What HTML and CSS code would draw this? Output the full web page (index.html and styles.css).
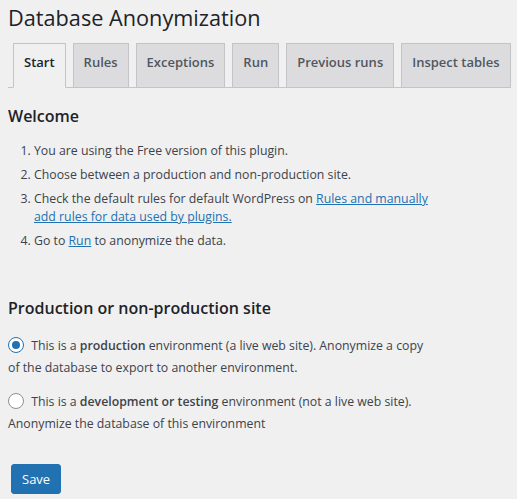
FILE: index.html
```html
<!DOCTYPE html>
<html>
<head>
<meta charset="utf-8">
<link rel="stylesheet" href="styles.css">
</head>
<body>
<div class="wrap">
  <h1 class="title">Database Anonymization</h1>
  <nav class="tabs">
    <a class="tab active">Start</a>
    <a class="tab">Rules</a>
    <a class="tab">Exceptions</a>
    <a class="tab">Run</a>
    <a class="tab">Previous runs</a>
    <a class="tab">Inspect tables</a>
  </nav>
  <section class="content">
    <h2 class="heading">Welcome</h2>
    <ol class="steps">
      <li>You are using the Free version of this plugin.</li>
      <li>Choose between a production and non-production site.</li>
      <li>Check the default rules for default WordPress on <a class="link">Rules and manually add rules for data used by plugins.</a></li>
      <li>Go to <a class="link">Run</a> to anonymize the data.</li>
    </ol>
    <h2 class="heading heading-2">Production or non-production site</h2>
    <div class="option">
      <label><span class="radio checked"></span> This is a <b>production</b> environment (a live web site). Anonymize a copy of the database to export to another environment.</label>
    </div>
    <div class="option">
      <label><span class="radio"></span> This is a <b>development or testing</b> environment (not a live web site). Anonymize the database of this environment</label>
    </div>
    <button class="btn">Save</button>
  </section>
</div>
</body>
</html>
```
FILE: styles.css
```css
html, body { margin: 0; padding: 0; background: #f0f0f1; }
body {
  font-family: "Open Sans", "Noto Sans", sans-serif;
  font-size: 12.3px;
  color: #3c434a;
}
.wrap { padding: 0 8px; }
.title {
  margin: 0;
  padding-top: 3px;
  font-size: 21.7px;
  font-weight: 400;
  line-height: 30px;
  color: #1d2327;
}
.tabs {
  display: flex;
  gap: 7px;
  margin-top: 10px;
  padding-left: 5px;
  border-bottom: 1px solid #c3c4c7;
  height: 44px;
  align-items: flex-end;
}
.tab {
  display: block;
  box-sizing: border-box;
  height: 45px;
  margin-bottom: -1px;
  padding: 6px 10px 12px;
  font-size: 13px;
  font-weight: 600;
  line-height: 25px;
  white-space: nowrap;
  color: #50575e;
  background: #dcdcde;
  border: 1px solid #c3c4c7;
}
.tab.active {
  background: #f0f0f1;
  color: #1d2327;
  border-bottom-color: #f0f0f1;
}
.content { max-width: 425px; }
.heading {
  margin: 17px 0 0;
  font-size: 16px;
  font-weight: 600;
  line-height: 22px;
  color: #1d2327;
}
.heading-2 { margin-top: 47px; }
.steps {
  margin: 15px 0 0;
  padding-left: 26px;
  line-height: 18px;
}
.steps li { margin-bottom: 6px; }
.link { color: #2271b1; text-decoration: underline; }
.option { margin-top: 16px; line-height: 22px; }
.option + .option { margin-top: 12px; }
.option b { font-weight: 600; }
.radio {
  display: inline-block;
  box-sizing: border-box;
  width: 16px;
  height: 16px;
  border: 1px solid #8c8f94;
  border-radius: 50%;
  background: #fff;
  vertical-align: -3px;
  margin-right: 4px;
  position: relative;
}
.radio.checked { border-color: #2271b1; }
.radio.checked::after {
  content: "";
  position: absolute;
  left: 3px; top: 3px;
  width: 8px; height: 8px;
  border-radius: 50%;
  background: #2271b1;
}
.btn {
  display: block;
  margin: 29px 0 0 3px;
  height: 30px;
  padding: 0 10px;
  font-family: inherit;
  font-size: 13px;
  color: #fff;
  background: #2271b1;
  border: 1px solid #2271b1;
  border-radius: 3px;
}
```
